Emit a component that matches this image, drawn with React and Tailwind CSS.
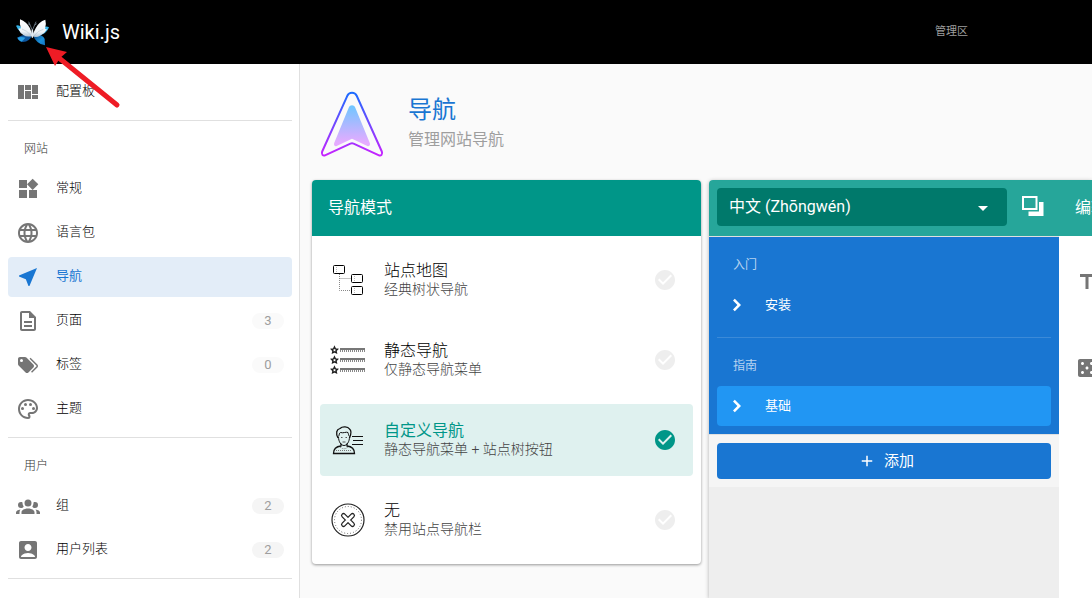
import React from 'react';
import {
  MdAccountBox,
  MdAdd,
  MdArrowDropDown,
  MdCasino,
  MdCheckCircle,
  MdLanguage,
  MdNearMe,
  MdOutlineDescription,
  MdOutlinePalette,
  MdTitle,
  MdWidgets,
} from 'react-icons/md';

const mdi = (d) => ({ size = 24, className }) => (
  <svg width={size} height={size} viewBox="0 0 24 24" fill="currentColor" className={className} aria-hidden="true">
    <path d={d} />
  </svg>
);

const DashboardIcon = mdi('M2,5V19H8V5H2M9,5V10H15V5H9M16,5V14H22V5H16M9,11V19H15V11H9M16,15V19H22V15H16Z');
const TagsIcon = mdi(
  'M5.5,9A1.5,1.5 0 0,0 7,7.5A1.5,1.5 0 0,0 5.5,6A1.5,1.5 0 0,0 4,7.5A1.5,1.5 0 0,0 5.5,9M17.41,11.58C17.77,11.94 18,12.44 18,13C18,13.55 17.78,14.05 17.41,14.41L12.41,19.41C12.05,19.77 11.55,20 11,20C10.45,20 9.95,19.78 9.58,19.41L2.59,12.42C2.22,12.05 2,11.55 2,11V6C2,4.89 2.89,4 4,4H9C9.55,4 10.05,4.22 10.41,4.58L17.41,11.58M13.54,5.71L14.54,4.71L21.41,11.58C21.78,11.94 22,12.45 22,13C22,13.55 21.78,14.05 21.42,14.41L16.04,19.79L15.04,18.79L20.75,13L13.54,5.71Z'
);
const GroupIcon = mdi(
  'M12,5.5A3.5,3.5 0 0,1 15.5,9A3.5,3.5 0 0,1 12,12.5A3.5,3.5 0 0,1 8.5,9A3.5,3.5 0 0,1 12,5.5M5,8C5.56,8 6.08,8.15 6.53,8.42C6.38,9.85 6.8,11.27 7.66,12.38C7.16,13.34 6.16,14 5,14A3,3 0 0,1 2,11A3,3 0 0,1 5,8M19,8A3,3 0 0,1 22,11A3,3 0 0,1 19,14C17.84,14 16.84,13.34 16.34,12.38C17.2,11.27 17.62,9.85 17.47,8.42C17.92,8.15 18.44,8 19,8M5.5,18.25C5.5,16.18 8.41,14.5 12,14.5C15.59,14.5 18.5,16.18 18.5,18.25V20H5.5V18.25M0,20V18.5C0,17.11 1.89,15.94 4.45,15.6C3.86,16.28 3.5,17.22 3.5,18.25V20H0M24,20H20.5V18.25C20.5,17.22 20.14,16.28 19.55,15.6C22.11,15.94 24,17.11 24,18.5V20Z'
);
const CopyLocaleIcon = mdi('M1,2H16.5V16H1V2M3,4V14H14.5V4H3M18,8H22.5V22H7.5V17.5H18V8Z');
const ChevronIcon = mdi('M8,16.4L12.4,12L8,7.6L9.8,5.8L16,12L9.8,18.2L8,16.4Z');

const Logo = () => (
  <svg width="34" height="27" viewBox="0 0 102 81" aria-hidden="true">
    <defs>
      <linearGradient id="wing" x1="0" y1="0" x2="0" y2="1">
        <stop offset="0" stopColor="#ffffff" />
        <stop offset="0.7" stopColor="#eef3f7" />
        <stop offset="1" stopColor="#b4c6d6" />
      </linearGradient>
      <linearGradient id="tail" x1="0" y1="0" x2="1" y2="1">
        <stop offset="0" stopColor="#0a3f7c" />
        <stop offset="0.6" stopColor="#1a8fd8" />
        <stop offset="1" stopColor="#1273c4" />
      </linearGradient>
    </defs>
    <path d="M4 56Q20 44 48 48Q42 68 20 69Q8 66 4 56Z" fill="#0d56a0" />
    <path d="M4 56Q16 52 28 56Q22 64 16 68Q8 66 4 56Z" fill="#2aa0e4" />
    <path d="M50 48Q78 42 86 60L87 79Q62 76 50 48Z" fill="url(#tail)" />
    <path d="M0 20Q8 17 16 24L34 48Q10 44 0 20Z" fill="#35b3e8" />
    <path d="M99 25Q90 19 84 26L66 50Q92 46 99 25Z" fill="#35b3e8" />
    <path d="M12 1Q32 8 42 28L50 50Q34 56 22 48Q12 42 7 29L15 28Q10 16 12 1Z" fill="url(#wing)" />
    <path d="M88 2Q68 8 59 28L48 50Q60 58 72 50Q86 44 93 31L87 30Q92 16 88 2Z" fill="url(#wing)" />
    <path d="M18 30Q32 34 46 50M82 31Q66 34 54 51" stroke="#a9bccb" strokeWidth="1.5" fill="none" />
    <path d="M38 8L48 32M60 8L50 32M42 18L36 14M56 18L62 14" stroke="#8fa3b3" strokeWidth="2" fill="none" />
    <ellipse cx="49" cy="44" rx="3" ry="13" fill="#dfe9f1" />
  </svg>
);

const NavigationArt = () => (
  <svg width="80" height="80" viewBox="0 0 80 80" aria-hidden="true">
    <defs>
      <linearGradient id="outline" gradientUnits="userSpaceOnUse" x1="0" y1="8" x2="0" y2="72">
        <stop offset="0" stopColor="#1a6dff" />
        <stop offset="1" stopColor="#c822ff" />
      </linearGradient>
      <linearGradient id="inside" gradientUnits="userSpaceOnUse" x1="0" y1="21" x2="0" y2="59">
        <stop offset="0" stopColor="#6dc7ff" />
        <stop offset="1" stopColor="#e6abff" />
      </linearGradient>
    </defs>
    <path
      d="M35.3 11.8C37.2 7.8 42.8 7.8 44.7 11.8L69.8 67.5C71 70.4 69 72.4 66.5 71.2L41.6 59.6Q40 59 38.4 59.6L13.5 71.2C11 72.4 9 70.4 10.2 67.5Z"
      fill="none"
      stroke="url(#outline)"
      strokeWidth="2"
    />
    <path
      d="M36.8 23.4C38 20.4 42 20.4 43.2 23.4L57.8 59C58.6 61 57 62.8 55.3 62L40 54.8L24.7 62C23 62.8 21.4 61 22.2 59Z"
      fill="url(#inside)"
    />
  </svg>
);

const SitemapArt = () => (
  <svg width="40" height="40" viewBox="0 0 40 40" fill="none" stroke="#000" aria-hidden="true">
    <path d="M11.5 14V30.5H24M11.5 18.5H24" stroke="#888" strokeDasharray="1 1" />
    <rect x="5.5" y="5.5" width="11" height="8" rx="1" />
    <rect x="23.5" y="14.5" width="11" height="8" rx="1" />
    <rect x="23.5" y="26.5" width="11" height="8" rx="1" />
    <path d="M8.5 7V12M26.5 16V21M26.5 28V33" stroke="#bbb" strokeDasharray="1 1" />
  </svg>
);

const StaticArt = () => (
  <svg width="40" height="40" viewBox="0 0 40 40" aria-hidden="true">
    {[10, 20, 30].map((y) => (
      <g key={y} transform={`translate(0 ${y})`}>
        <path
          d="M6.5 -3L7.4 -1.1L9.5 -0.8L8 0.7L8.4 2.8L6.5 1.8L4.6 2.8L5 0.7L3.5 -0.8L5.6 -1.1Z"
          fill="#fff"
          stroke="#222"
          strokeWidth="1.4"
        />
        <path d="M12 -1H37" stroke="#777" strokeWidth="2" />
        <path d="M12 1H37" stroke="#888" strokeWidth="2" strokeDasharray="1 1" />
      </g>
    ))}
  </svg>
);

const PersonArt = () => (
  <svg width="40" height="40" viewBox="0 0 40 40" fill="none" stroke="#111" aria-hidden="true">
    <path d="M10 18C7.5 13 8.5 9.5 12 8.5C14.5 6 20 6.5 21.5 9C23.5 10.5 23 14.5 21.5 18" strokeWidth="1.3" />
    <path d="M10.5 16.5C11.5 15 11 13 12.5 12.5C15.5 13.5 18 11.5 20 12.5C20.5 14 20.5 15.5 21.5 16.5" />
    <path d="M10.5 17C10.5 21.5 13 25.5 16 25.5C19 25.5 21.5 21.5 21.5 17" />
    <path d="M13 17.5H14.5M17.5 17.5H19M14.5 22H17.5" stroke="#555" />
    <path d="M13 23.5V26C8.5 26.5 5.5 28 5.5 33.5H26.5C26.5 28 23.5 26.5 19 26V23.5" strokeWidth="1.3" />
    <path d="M12 27Q16 30.5 20 27M8 30.5H24" stroke="#777" strokeDasharray="1 1" />
    <path d="M24 16.5H35M25 20.5H35M24 24.5H35" />
  </svg>
);

const NoneArt = () => (
  <svg width="40" height="40" viewBox="0 0 40 40" fill="none" aria-hidden="true">
    <circle cx="20" cy="20" r="16" stroke="#222" strokeWidth="1.2" />
    <circle cx="20" cy="20" r="13.5" stroke="#666" strokeDasharray="1 2" />
    <path d="M15.5 15.5L24.5 24.5M24.5 15.5L15.5 24.5" stroke="#222" strokeWidth="5" strokeLinecap="round" />
    <path d="M15.5 15.5L24.5 24.5M24.5 15.5L15.5 24.5" stroke="#fff" strokeWidth="2.5" strokeLinecap="round" />
  </svg>
);

const siteItems = [
  { icon: MdWidgets, label: '常规' },
  { icon: MdLanguage, label: '语言包' },
  { icon: MdNearMe, label: '导航', active: true },
  { icon: MdOutlineDescription, label: '页面', count: 3, badge: 'bg-[#fafafa]' },
  { icon: TagsIcon, label: '标签', count: 0, badge: 'bg-[#fafafa]' },
  { icon: MdOutlinePalette, label: '主题' },
];

const userItems = [
  { icon: GroupIcon, label: '组', count: 2, badge: 'bg-[#f5f5f5]' },
  { icon: MdAccountBox, label: '用户列表', count: 2, badge: 'bg-[#f5f5f5]' },
];

const modes = [
  { art: SitemapArt, title: '站点地图', description: '经典树状导航' },
  { art: StaticArt, title: '静态导航', description: '仅静态导航菜单' },
  { art: PersonArt, title: '自定义导航', description: '静态导航菜单 + 站点树按钮', active: true },
  { art: NoneArt, title: '无', description: '禁用站点导航栏' },
];

const NavItem = ({ icon: Icon, label, count, badge, active }) => (
  <a
    href="#"
    className={`flex h-10 items-center gap-4 rounded px-2 text-[13px] ${
      active ? 'bg-[#e3edf8] font-normal text-[#1976d2]' : 'font-light text-black'
    }`}
  >
    <Icon size={24} className={active ? 'text-[#1976d2]' : 'text-[#757575]'} />
    <span className="flex-1 pb-0.5">{label}</span>
    {count !== undefined && (
      <span
        className={`flex h-4 w-8 items-center justify-center rounded-full text-[13px] font-normal text-[#9e9e9e] ${badge}`}
      >
        {count}
      </span>
    )}
  </a>
);

const NavSection = ({ title, items }) => (
  <section className="border-b border-[#e0e0e0] py-2">
    {title && <h2 className="flex h-10 items-center px-4 text-xs font-light text-[#333333]">{title}</h2>}
    <div className="flex flex-col gap-1">
      {items.map((item) => (
        <NavItem key={item.label} {...item} />
      ))}
    </div>
  </section>
);

const ModeRow = ({ art: Art, title, description, active }) => (
  <button
    type="button"
    className={`flex h-18 w-full items-center gap-4 rounded pl-2 pr-4 text-left ${active ? 'bg-[#dff1ef]' : ''}`}
  >
    <Art />
    <span className="flex flex-1 flex-col">
      <span className={`text-base leading-[19px] ${active ? 'font-normal text-[#009688]' : 'font-light text-black'}`}>
        {title}
      </span>
      <span className="text-sm font-light leading-[19px] text-[#444444]">{description}</span>
    </span>
    <MdCheckCircle size={24} className={active ? 'text-[#009688]' : 'text-[#eeeeee]'} />
  </button>
);

const TreeItem = ({ label, active }) => (
  <button
    type="button"
    className={`flex h-10 w-full items-center gap-4 rounded px-2 text-left text-[13px] text-white ${
      active ? 'bg-[#2196f3]' : ''
    }`}
  >
    <ChevronIcon />
    {label}
  </button>
);

const TreeHeader = ({ children }) => (
  <h3 className="flex h-10 items-center px-4 text-xs text-white/70">{children}</h3>
);

export default function App() {
  return (
    <div className="relative flex min-h-screen flex-col overflow-hidden bg-[#fafafa] font-[Roboto,'Noto_Sans_CJK_SC',sans-serif]">
      <header className="flex h-16 items-center justify-between bg-black pl-4 pr-[124px]">
        <div className="flex items-center gap-3 text-xl text-white">
          <Logo />
          <span>Wiki.js</span>
        </div>
        <span className="text-[11px] text-[#9e9e9e]">管理区</span>
      </header>

      <div className="flex flex-1">
        <nav className="w-[300px] shrink-0 border-r border-[#e0e0e0] bg-white pl-2 pr-[7px]">
          <NavSection items={[{ icon: DashboardIcon, label: '配置板' }]} />
          <NavSection title="网站" items={siteItems} />
          <NavSection title="用户" items={userItems} />
        </nav>

        <main className="flex min-w-0 flex-1 flex-col pl-3 pt-5">
          <div className="mb-4 flex items-center gap-4">
            <NavigationArt />
            <div>
              <h1 className="text-2xl leading-8 text-[#1976d2]">导航</h1>
              <p className="text-base leading-7 text-[#9e9e9e]">管理网站导航</p>
            </div>
          </div>

          <div className="flex flex-1 gap-2">
            <section className="w-[389px] shrink-0 self-start overflow-hidden rounded bg-white shadow-[0_1px_3px_rgba(0,0,0,0.4)]">
              <h2 className="flex h-14 items-center bg-[#009688] px-4 text-base text-white">导航模式</h2>
              <div className="flex flex-col gap-2 p-2">
                {modes.map((mode) => (
                  <ModeRow key={mode.title} {...mode} />
                ))}
              </div>
            </section>

            <section className="flex min-w-0 flex-1 flex-col overflow-hidden rounded-tl bg-white shadow-[0_1px_4px_rgba(0,0,0,0.3)]">
              <div className="flex h-14 shrink-0 items-start bg-[#26a69a] p-2 text-white">
                <div className="relative shrink-0">
                  <select
                    aria-label="语言"
                    className="h-[38px] w-[290px] appearance-none rounded bg-[#00796b] px-3 text-base text-white"
                  >
                    <option>中文 (Zhōngwén)</option>
                  </select>
                  <MdArrowDropDown size={24} className="pointer-events-none absolute right-3 top-2" />
                </div>
                <button type="button" aria-label="复制" className="ml-3.5 flex h-9 shrink-0 items-center">
                  <CopyLocaleIcon />
                </button>
                <button type="button" className="ml-[30px] h-10 shrink-0 whitespace-nowrap text-base">
                  编辑
                </button>
              </div>

              <div className="flex flex-1">
                <div className="flex w-[350px] shrink-0 flex-col bg-[#eeeeee]">
                  <div className="border-y border-[#e0e0e0] bg-[#1976d2] bg-clip-padding p-2">
                    <TreeHeader>入门</TreeHeader>
                    <TreeItem label="安装" />
                    <hr className="mb-2 mt-3 border-white/15" />
                    <TreeHeader>指南</TreeHeader>
                    <TreeItem label="基础" active />
                  </div>
                  <div className="bg-[#f5f5f5] p-2">
                    <button
                      type="button"
                      className="flex h-9 w-full items-center justify-center gap-2 rounded bg-[#1976d2] pl-1 text-[15px] text-white"
                    >
                      <MdAdd size={18} />
                      添加
                    </button>
                  </div>
                </div>
                <div className="flex flex-col gap-[62px] px-4 pt-[34px] text-[#757575]">
                  <MdTitle size={24} className="shrink-0" />
                  <MdCasino size={24} className="shrink-0" />
                </div>
              </div>
            </section>
          </div>
        </main>
      </div>

      {/* Red pointer over the logo */}
      <svg className="pointer-events-none absolute left-10 top-10" width="84" height="72" viewBox="0 0 84 72" aria-hidden="true">
        <path d="M19 18L77 65" stroke="#ee1c25" strokeWidth="5" strokeLinecap="round" />
        <path d="M6 7L27 12L20 18L15 26Z" fill="#ee1c25" />
      </svg>
    </div>
  );
}
